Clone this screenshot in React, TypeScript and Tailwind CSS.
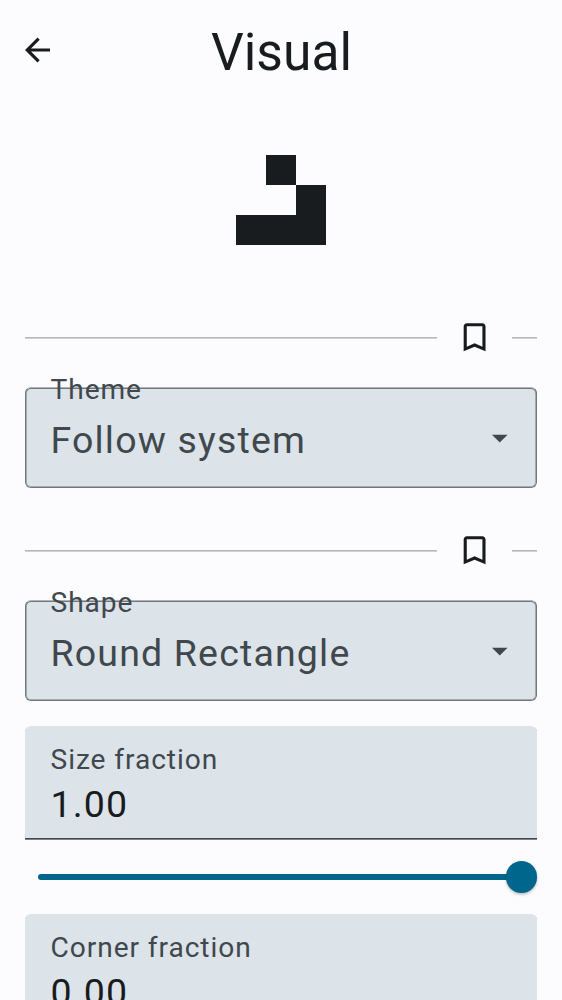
import React from "react";

function Divider() {
  return (
    <div className="flex h-[38px] items-center">
      <div className="h-[2px] w-[412px] border-t border-[#b5b7ba] bg-[#cfd0d3]" />
      <div className="w-[75px] pl-[19px]">
        <svg className="h-[38px] w-[38px]" viewBox="0.1 0.3 24.32 24.32" fill="#191c1e">
          <path d="M17 3H7c-1.1 0-1.99.9-1.99 2L5 21l7-3 7 3V5c0-1.1-.9-2-2-2zm0 15-5-2.18L7 18V5h10v13z" />
        </svg>
      </div>
      <div className="h-[2px] w-[25px] border-t border-[#b5b7ba] bg-[#cfd0d3]" />
    </div>
  );
}

function SelectField({ label, value }: { label: string; value: string }) {
  return (
    <div className="relative flex h-[101px] items-center justify-between rounded-[6px] border border-[#70787d] border-t-[#aeb4b8] bg-[#dce3e9] pr-[18px] pl-[24.5px] shadow-[inset_0_1px_0_0_#70787d,inset_0_0_0_1px_#a3abb0]">
      <span className="absolute top-[-16px] left-[24.5px] text-[28.125px] leading-[36px] tracking-[0.94px] text-[#40484d]">
        {label}
      </span>
      <span className="pt-[4px] text-[37.5px] leading-[56px] tracking-[1.17px] text-[#40484d]">{value}</span>
      <svg className="h-[37.5px] w-[37.5px]" viewBox="0 0 24 24" fill="#40484d">
        <path d="M7 10l5 5 5-5z" />
      </svg>
    </div>
  );
}

function NumberField({ label, value }: { label: string; value: string }) {
  return (
    <div className="flex h-[114px] flex-col rounded-t-[6px] bg-[#dce3e9] px-[25.5px] pt-[15px] shadow-[inset_0_-1px_0_0_#7b8287,inset_0_-2px_0_0_#40484d]">
      <span className="text-[28.125px] leading-[38px] tracking-[0.94px] text-[#40484d]">{label}</span>
      <span className="text-[37.5px] leading-[50px] tracking-[1.17px] text-[#191c1e]">{value}</span>
    </div>
  );
}

export default function App() {
  return (
    <main className="h-[1000px] w-[562px] overflow-hidden bg-[#fcfcff] px-[25px] font-['Roboto',sans-serif] text-[#191c1e]">
      <header className="grid h-[100px] grid-cols-[38px_1fr_38px] items-center">
        <svg className="-ml-[6px] h-[38px] w-[38px]" viewBox="0.16 -0.16 24.32 24.32" fill="#191c1e">
          <path d="M20 11H7.83l5.59-5.59L12 4l-8 8 8 8 1.41-1.41L7.83 13H20v-2z" />
        </svg>
        <h1 className="pt-[6px] pl-px text-center text-[51.56px] leading-[66px]">Visual</h1>
      </header>
      <div className="flex h-[219px] justify-center pt-[55px]">
        <svg className="h-[90px] w-[90px]" viewBox="0 0 3 3" fill="#191c1e" shapeRendering="crispEdges">
          <path d="M1 0h1v1H1zM2 1h1v2H0V2h2z" />
        </svg>
      </div>
      <Divider />
      <div className="pt-[30px] pb-[44px]">
        <SelectField label="Theme" value="Follow system" />
      </div>
      <Divider />
      <div className="pt-[30px] pb-[25px]">
        <SelectField label="Shape" value="Round Rectangle" />
      </div>
      <NumberField label="Size fraction" value="1.00" />
      <div className="flex h-[74.45px] items-center pb-[0.5px] pl-[12.5px]">
        <div className="-mr-[4px] h-[6px] flex-1 rounded-l-full bg-[#00668b]" />
        <div className="h-[31.25px] w-[31.25px] rounded-full bg-[#00668b] shadow-[0_1.5px_3px_rgba(0,0,0,0.25)]" />
      </div>
      <NumberField label="Corner fraction" value="0.00" />
    </main>
  );
}
